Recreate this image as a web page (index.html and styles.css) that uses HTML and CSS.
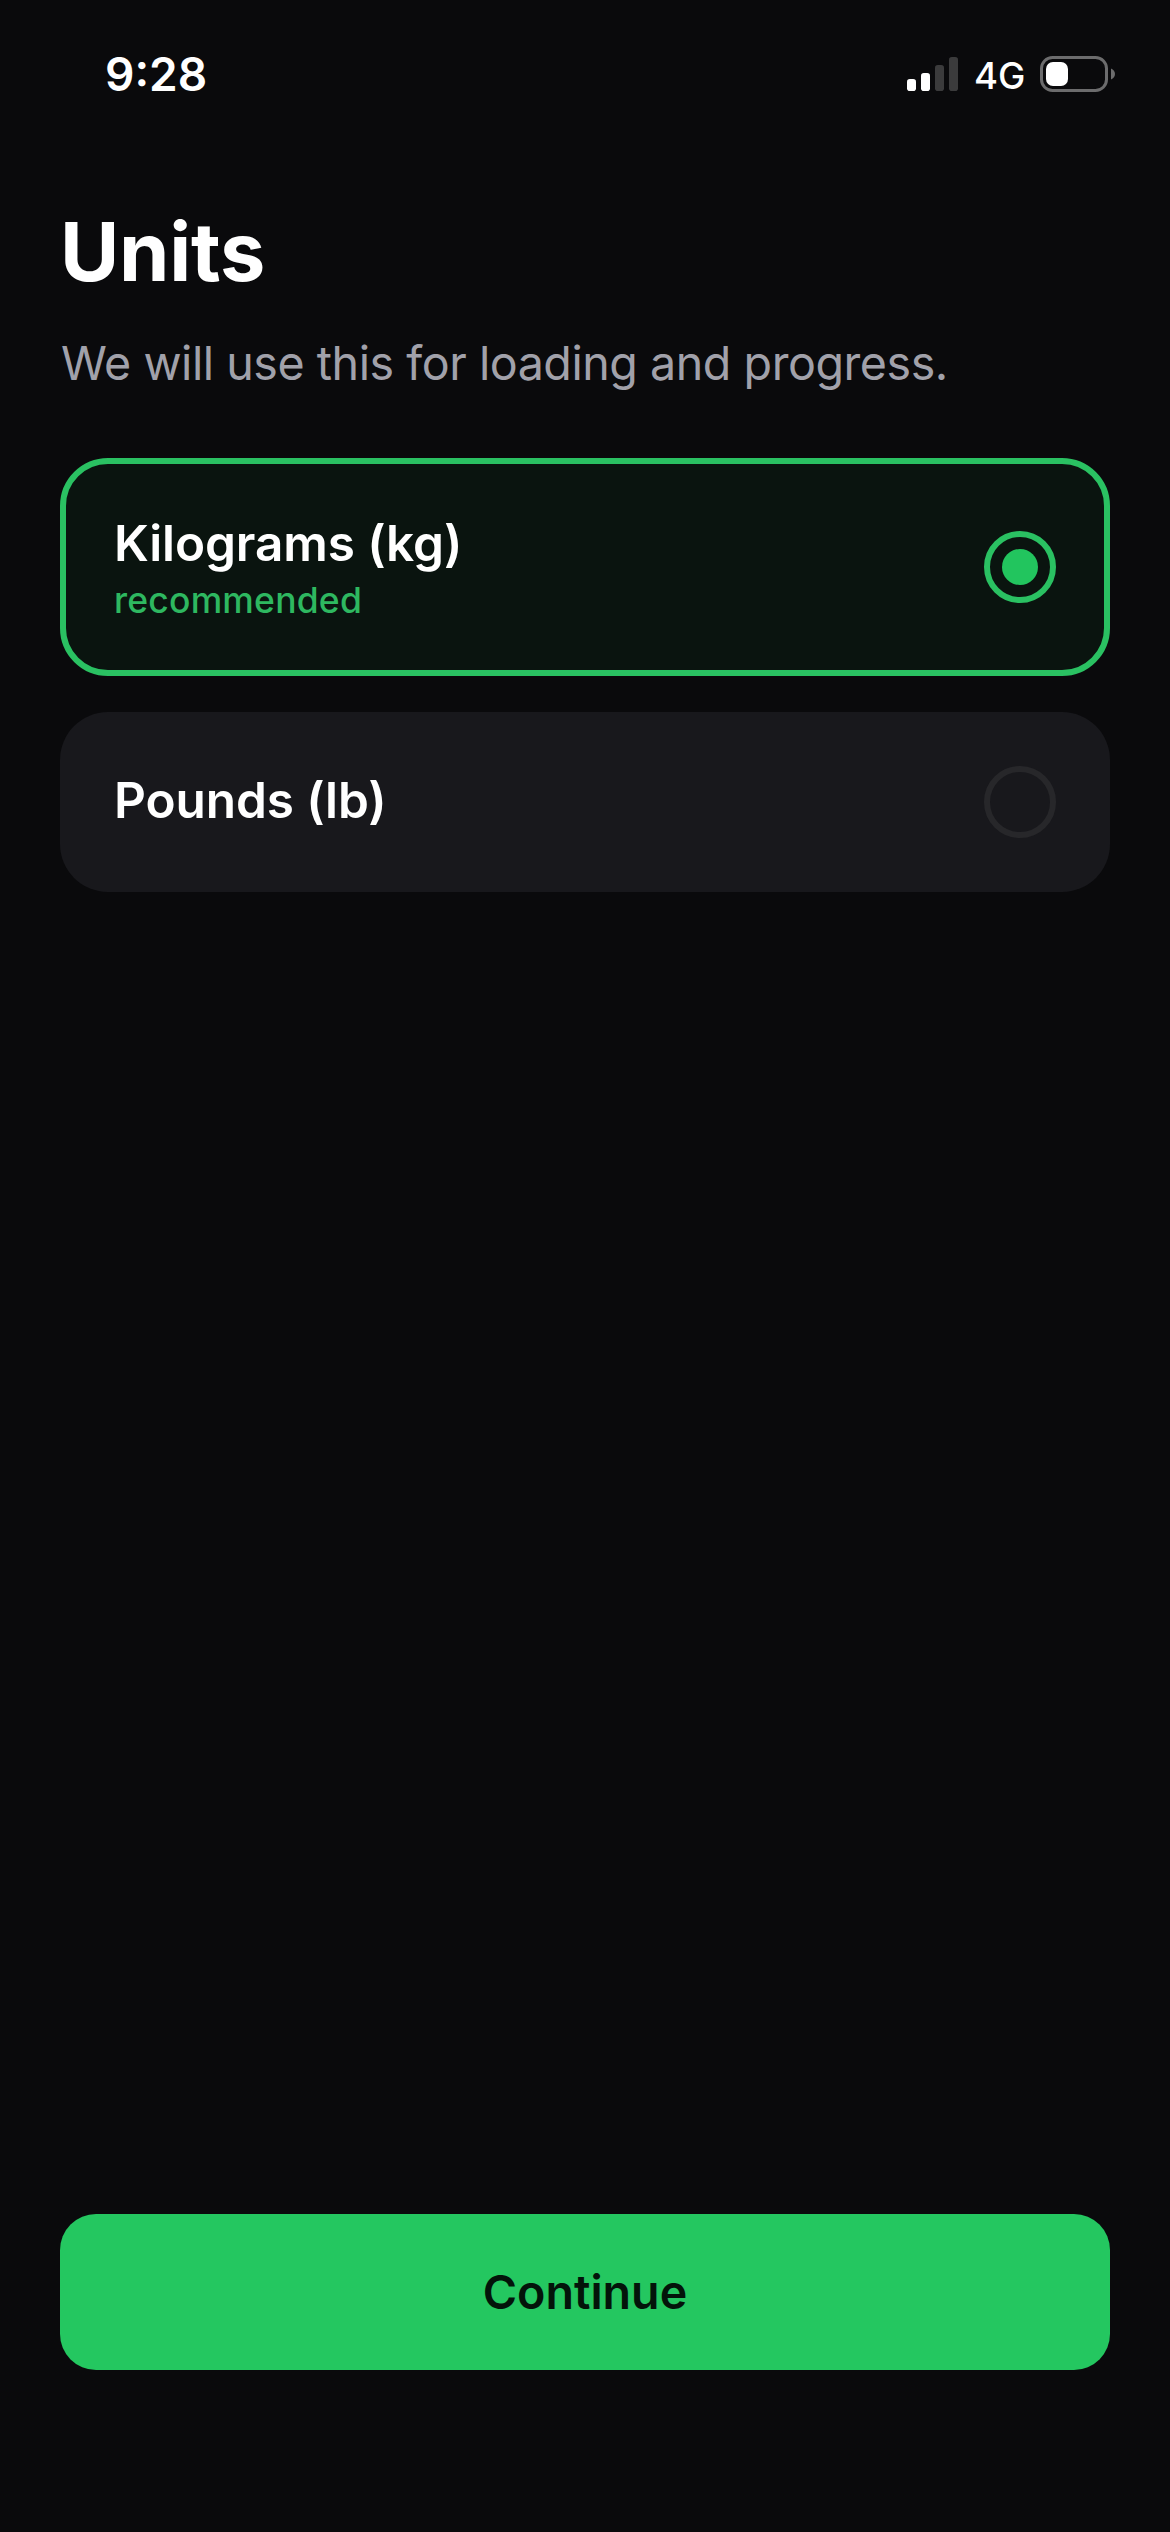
FILE: index.html
```html
<!DOCTYPE html>
<html lang="en">
<head>
<meta charset="utf-8">
<title>Units</title>
<link rel="stylesheet" href="styles.css">
</head>
<body>
<div class="screen">
  <header class="status">
    <span class="time">9:28</span>
    <div class="indicators">
      <svg class="signal" width="52" height="34" viewBox="0 0 52 34" aria-hidden="true">
        <rect x="0" y="22" width="9" height="12" rx="2.8" fill="#fff"/>
        <rect x="14" y="16" width="9" height="18" rx="2.8" fill="#fff"/>
        <rect x="28" y="8" width="9" height="26" rx="2.8" fill="#3b3b3c"/>
        <rect x="42" y="0" width="9" height="34" rx="2.8" fill="#3b3b3c"/>
      </svg>
      <span class="network">4G</span>
      <svg class="battery" width="76" height="36" viewBox="0 0 76 36" aria-hidden="true">
        <rect x="1.5" y="1.5" width="65" height="33" rx="11" fill="none" stroke="#6c6c6d" stroke-width="3"/>
        <rect x="6" y="6" width="22" height="24" rx="7" fill="#fff"/>
        <path d="M71 12.5c2.5 1 4 3 4 5.500s-1.500 4.500-4 5.500z" fill="#6c6c6d"/>
      </svg>
    </div>
  </header>
  <main class="content">
    <h1 class="title">Units</h1>
    <p class="subtitle">We will use this for loading and progress.</p>
    <div class="options" role="radiogroup">
      <div class="option selected" role="radio" aria-checked="true">
        <div class="labels">
          <span class="name">Kilograms (kg)</span>
          <span class="hint">recommended</span>
        </div>
        <span class="radio"><span class="dot"></span></span>
      </div>
      <div class="option" role="radio" aria-checked="false">
        <div class="labels"><span class="name">Pounds (lb)</span></div>
        <span class="radio"></span>
      </div>
    </div>
  </main>
  <button class="continue">Continue</button>
</div>
</body>
</html>
```
FILE: styles.css
```css
* { box-sizing: border-box; }

body {
  margin: 0;
  background: #0a0a0c;
  color: #fff;
  font-family: Inter, "Liberation Sans", sans-serif;
}

.screen {
  display: flex;
  flex-direction: column;
  width: 1170px;
  height: 2532px;
  padding: 0 60px 162px;
}

.status {
  display: flex;
  justify-content: space-between;
  height: 141px;
  padding: 44px 0 0 45px;
}

.time {
  font-size: 46px;
  line-height: 60px;
  font-weight: 600;
}

.indicators {
  display: flex;
  margin-right: -6px;
}

.signal { margin-top: 13px; }

.network {
  width: 81px;
  padding-left: 15px;
  font-size: 36.6px;
  line-height: 64px;
  font-weight: 450;
}

.battery { margin-top: 12px; }

.content { flex: 1; }

.title {
  margin: 61px 0 0;
  font-size: 81px;
  line-height: 100px;
  font-weight: 700;
  letter-spacing: -0.2px;
}

.subtitle {
  margin: 31px 0 0;
  padding-left: 1px;
  color: #a1a1aa;
  font-size: 46.6px;
  line-height: 60px;
  letter-spacing: -0.46px;
}

.options {
  display: flex;
  flex-direction: column;
  gap: 36px;
  margin-top: 65px;
}

.option {
  display: flex;
  align-items: center;
  justify-content: space-between;
  height: 180px;
  padding: 0 54px;
  border-radius: 48px;
  background: #18181c;
}

.selected {
  height: 218px;
  padding: 0 48px;
  border: 6px solid #2ac162;
  background: #0a140f;
}

.labels {
  display: flex;
  flex-direction: column;
  padding-bottom: 4px;
}

.selected .labels { padding: 8px 0 0; }

.name {
  font-size: 49.5px;
  line-height: 60px;
  font-weight: 600;
  letter-spacing: -0.1px;
}

.hint {
  color: #2eb860;
  font-size: 35.5px;
  line-height: 56px;
  font-weight: 500;
  letter-spacing: 0.2px;
}

.radio {
  display: flex;
  align-items: center;
  justify-content: center;
  width: 72px;
  height: 72px;
  border: 6px solid #27272a;
  border-radius: 50%;
}

.selected .radio { border-color: #2ac162; }

.dot {
  width: 36px;
  height: 36px;
  border-radius: 50%;
  background: #22c55e;
}

.continue {
  height: 156px;
  padding: 0;
  border: 0;
  border-radius: 36px;
  background: #24c760;
  color: #03140a;
  font-family: inherit;
  font-size: 46.6px;
  line-height: 60px;
  font-weight: 600;
}
```
